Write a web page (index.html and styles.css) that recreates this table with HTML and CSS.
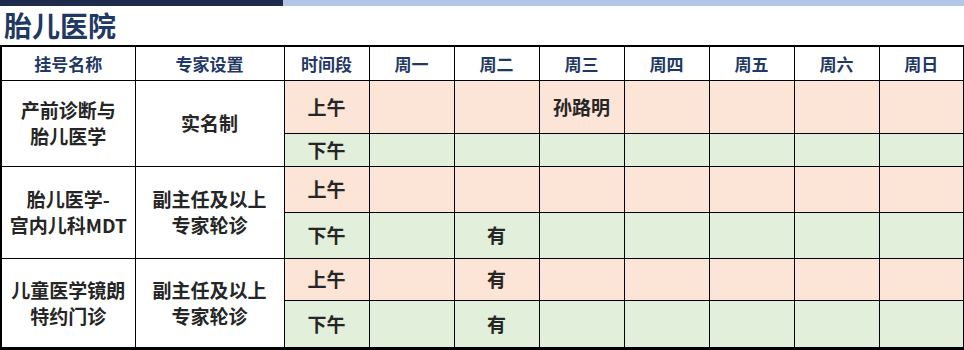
FILE: index.html
```html
<!DOCTYPE html>
<html lang="zh">
<head>
<meta charset="utf-8">
<link rel="stylesheet" href="styles.css">
</head>
<body>
<div class="topbar"><div class="bar-dark"></div><div class="bar-light"></div></div>
<h1 class="title">胎儿医院</h1>
<table class="sched">
  <colgroup>
    <col class="c-name"><col class="c-set"><col class="c-time">
    <col class="c-day"><col class="c-day"><col class="c-day"><col class="c-day"><col class="c-day"><col class="c-day"><col class="c-day">
  </colgroup>
  <thead>
    <tr class="r-head">
      <th>挂号名称</th><th>专家设置</th><th>时间段</th>
      <th>周一</th><th>周二</th><th>周三</th><th>周四</th><th>周五</th><th>周六</th><th>周日</th>
    </tr>
  </thead>
  <tbody>
    <tr class="am r1a">
      <td rowspan="2" class="info">产前诊断与<br>胎儿医学</td>
      <td rowspan="2" class="info">实名制</td>
      <td>上午</td><td></td><td></td><td>孙路明</td><td></td><td></td><td></td><td></td>
    </tr>
    <tr class="pm r1b">
      <td>下午</td><td></td><td></td><td></td><td></td><td></td><td></td><td></td>
    </tr>
    <tr class="am r2a">
      <td rowspan="2" class="info">胎儿医学-<br>宫内儿科MDT</td>
      <td rowspan="2" class="info">副主任及以上<br>专家轮诊</td>
      <td>上午</td><td></td><td></td><td></td><td></td><td></td><td></td><td></td>
    </tr>
    <tr class="pm r2b">
      <td>下午</td><td></td><td>有</td><td></td><td></td><td></td><td></td><td></td>
    </tr>
    <tr class="am r3a">
      <td rowspan="2" class="info">儿童医学镜朗<br>特约门诊</td>
      <td rowspan="2" class="info">副主任及以上<br>专家轮诊</td>
      <td>上午</td><td></td><td>有</td><td></td><td></td><td></td><td></td><td></td>
    </tr>
    <tr class="pm r3b">
      <td>下午</td><td></td><td>有</td><td></td><td></td><td></td><td></td><td></td>
    </tr>
  </tbody>
</table>
</body>
</html>
```
FILE: styles.css
```css
html, body {
  margin: 0;
  padding: 0;
  background: #ffffff;
  font-family: "Noto Sans CJK SC", "Noto Sans", sans-serif;
}
.topbar {
  display: flex;
  height: 6px;
}
.bar-dark {
  width: 283px;
  background: #1f2b4d;
}
.bar-light {
  flex: 1;
  background: #b4c6e7;
}
.title {
  margin: 0;
  height: 39px;
  padding-left: 4px;
  font-size: 28px;
  font-weight: 700;
  line-height: 38px;
  color: #1f3864;
  box-sizing: border-box;
}
.sched {
  border-collapse: collapse;
  table-layout: fixed;
  width: 963px;
  border-top: 2px solid #000;
  border-left: 2px solid #000;
  border-right: 2px solid #000;
  border-bottom: 3px solid #000;
}
.c-name { width: 134px; }
.c-set { width: 149px; }
.c-time { width: 85px; }
.c-day { width: 85px; }
.sched th, .sched td {
  border: 1px solid #000;
  padding: 0;
  text-align: center;
  vertical-align: middle;
  font-weight: 700;
}
.sched th {
  font-size: 17px;
  color: #1f3864;
  background: #fff;
}
.sched td {
  font-size: 19px;
  color: #262626;
  line-height: 26px;
}
.sched td.info {
  background: #fff;
}
.am td { background: #fce4d6; }
.pm td { background: #e2efda; }
.r-head { height: 34px; }
.r1a { height: 53px; }
.r1b { height: 33px; }
.r2a { height: 46px; }
.r2b { height: 46px; }
.r3a { height: 42px; }
.r3b { height: 48px; }
```
